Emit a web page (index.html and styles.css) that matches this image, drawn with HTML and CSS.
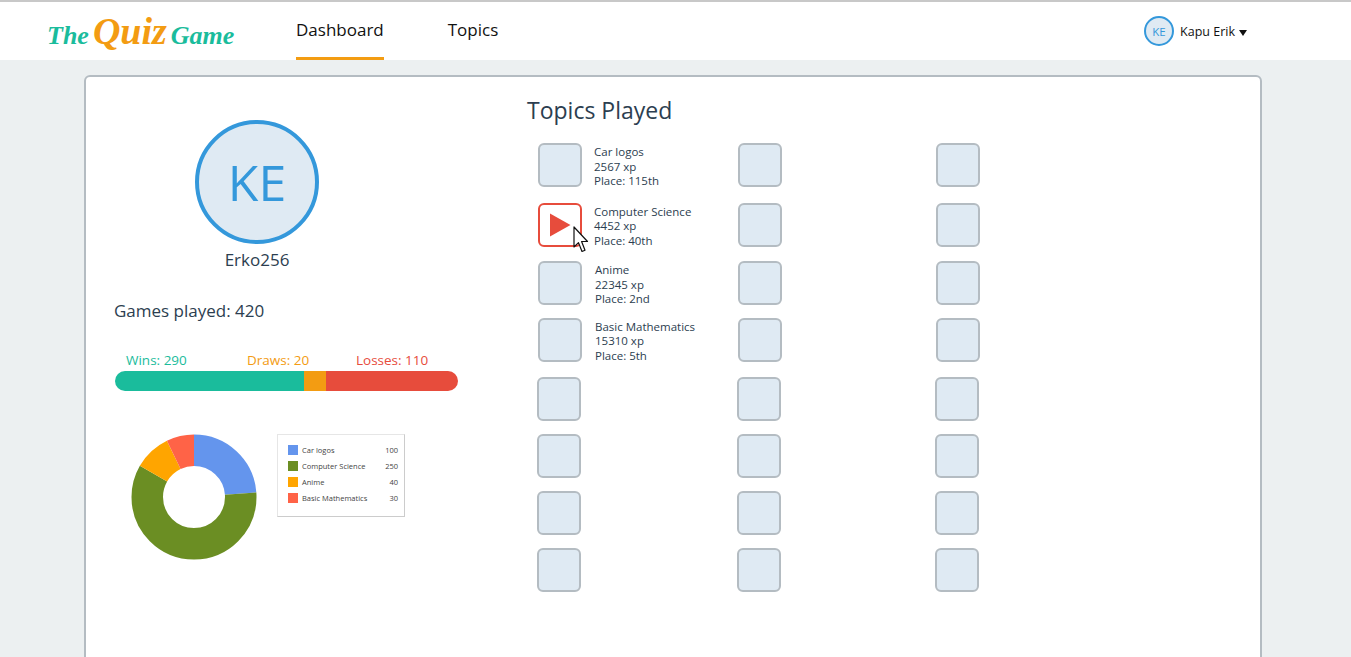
FILE: index.html
```html
<!DOCTYPE html>
<html lang="en">
<head>
  <meta charset="UTF-8">
  <title>The Quiz Game - Dashboard</title>
  <link rel="stylesheet" href="styles.css">
</head>
<body>

  <header class="topbar">
    <div class="logo"><span class="logo-small">The</span> <span class="logo-big">Quiz</span> <span class="logo-small">Game</span></div>
    <nav class="nav">
      <a class="nav-link active">Dashboard</a>
      <a class="nav-link">Topics</a>
    </nav>
    <div class="user">
      <div class="user-avatar">KE</div>
      <span class="user-name">Kapu Erik</span>
      <span class="caret"></span>
    </div>
  </header>

  <main class="card">
    <section class="profile">
      <div class="avatar">KE</div>
      <div class="username">Erko256</div>
      <div class="games">Games played: 420</div>

      <div class="bar-labels">
        <span class="label-wins">Wins: 290</span>
        <span class="label-draws">Draws: 20</span>
        <span class="label-losses">Losses: 110</span>
      </div>
      <div class="bar">
        <div class="bar-wins"></div>
        <div class="bar-draws"></div>
        <div class="bar-losses"></div>
      </div>

      <div class="chart-row">
        <svg class="donut" width="126" height="126" viewBox="0 0 126 126">
          <g transform="rotate(-90 63 63)" fill="none" stroke-width="31.5">
            <circle cx="63" cy="63" r="46.75" pathLength="420" stroke="#6495ed" stroke-dasharray="100 320"></circle>
            <circle cx="63" cy="63" r="46.75" pathLength="420" stroke="#6b8e23" stroke-dasharray="250 170" stroke-dashoffset="-100"></circle>
            <circle cx="63" cy="63" r="46.75" pathLength="420" stroke="#ffa500" stroke-dasharray="40 380" stroke-dashoffset="-350"></circle>
            <circle cx="63" cy="63" r="46.75" pathLength="420" stroke="#ff6347" stroke-dasharray="30 390" stroke-dashoffset="-390"></circle>
          </g>
        </svg>
        <div class="legend">
          <div class="legend-row"><i class="swatch swatch-blue"></i><span class="legend-name">Car logos</span><span>100</span></div>
          <div class="legend-row"><i class="swatch swatch-green"></i><span class="legend-name">Computer Science</span><span>250</span></div>
          <div class="legend-row"><i class="swatch swatch-orange"></i><span class="legend-name">Anime</span><span>40</span></div>
          <div class="legend-row"><i class="swatch swatch-red"></i><span class="legend-name">Basic Mathematics</span><span>30</span></div>
        </div>
      </div>
    </section>

    <section class="topics">
      <h2>Topics Played</h2>
      <div class="tile-rows">
        <div class="tile-row">
          <div class="topic">
            <div class="tile"></div>
            <div class="topic-info">Car logos<br>2567 xp<br>Place: 115th</div>
          </div>
          <div class="tile"></div>
          <div class="tile"></div>
        </div>
        <div class="tile-row row-second">
          <div class="topic">
            <div class="tile tile-play">
              <svg width="22" height="24" viewBox="0 0 22 24"><path d="M1 0.5 21.5 12 1 23.5z" fill="#e74c3c"></path></svg>
              <svg class="pointer" width="16" height="29" viewBox="0 0 16 29"><path d="M1 1V21L5.5 16.6 9 25.500 12 24.200 8.600 15.500H14.500z" fill="#fff" stroke="#111" stroke-width="1.200" stroke-linejoin="round"></path></svg>
            </div>
            <div class="topic-info">Computer Science<br>4452 xp<br>Place: 40th</div>
          </div>
          <div class="tile"></div>
          <div class="tile"></div>
        </div>
        <div class="tile-row">
          <div class="topic">
            <div class="tile"></div>
            <div class="topic-info topic-shift">Anime<br>22345 xp<br>Place: 2nd</div>
          </div>
          <div class="tile"></div>
          <div class="tile"></div>
        </div>
        <div class="tile-row row-fourth">
          <div class="topic">
            <div class="tile"></div>
            <div class="topic-info topic-shift">Basic Mathematics<br>15310 xp<br>Place: 5th</div>
          </div>
          <div class="tile"></div>
          <div class="tile"></div>
        </div>
        <div class="tile-row row-lower row-fifth"><div class="tile"></div><div class="tile"></div><div class="tile"></div></div>
        <div class="tile-row row-lower"><div class="tile"></div><div class="tile"></div><div class="tile"></div></div>
        <div class="tile-row row-lower"><div class="tile"></div><div class="tile"></div><div class="tile"></div></div>
        <div class="tile-row row-lower"><div class="tile"></div><div class="tile"></div><div class="tile"></div></div>
      </div>
    </section>
  </main>

</body>
</html>
```

FILE: styles.css
```css
html, body {
  height: 657px;
  overflow: hidden;
}

body {
  margin: 0;
  background-color: #ecf0f1;
  color: #2c3e50;
  font-family: "Open Sans", "Noto Sans", sans-serif;
}

.topbar {
  height: 58px;
  border-top: 2px solid #c8c8c8;
  background-color: #fff;
  display: flex;
  align-items: center;
  padding-left: 47px;
  padding-right: 104px;
}

.logo {
  width: 249px;
  font-family: "Liberation Serif", serif;
  font-style: italic;
  font-weight: bold;
  color: #1abc9c;
  white-space: nowrap;
}

.logo-small {
  font-size: 26px;
}

.logo-big {
  font-size: 38px;
  color: #f39c12;
}

.nav {
  display: flex;
  align-self: stretch;
  gap: 64px;
}

.nav-link {
  display: flex;
  align-items: center;
  height: 55px;
  font-size: 17px;
  color: #111;
  border-bottom: 3px solid transparent;
}

.nav-link.active {
  border-bottom-color: #f39c12;
}

.user {
  margin-left: auto;
  display: flex;
  align-items: center;
  font-size: 12.5px;
  color: #111;
}

.user-avatar {
  width: 26px;
  height: 26px;
  border: 2px solid #3498db;
  border-radius: 50%;
  background-color: #dfeaf3;
  color: #3498db;
  font-size: 11.5px;
  display: flex;
  align-items: center;
  justify-content: center;
  margin-right: 6px;
}

.caret {
  margin-left: 4px;
  margin-top: 3px;
  border-left: 4.500px solid transparent;
  border-right: 4.500px solid transparent;
  border-top: 6px solid #111;
}

.card {
  margin: 15px 89px 0 84px;
  height: 700px;
  box-sizing: border-box;
  border: 2px solid #b4bcc2;
  border-radius: 6px;
  background-color: #fff;
  padding: 17px 0 0 28px;
  display: flex;
}

.profile {
  width: 345px;
  margin-right: 68px;
  padding-top: 26px;
}

.avatar {
  width: 116px;
  height: 116px;
  margin-left: 81px;
  border: 4px solid #3498db;
  border-radius: 50%;
  background-color: #dfeaf3;
  color: #3498db;
  font-size: 50px;
  display: flex;
  align-items: center;
  justify-content: center;
}

.username {
  width: 124px;
  margin: 3px 0 0 81px;
  text-align: center;
  font-size: 17px;
  line-height: 26px;
}

.games {
  margin-top: 25px;
  font-size: 17px;
  line-height: 26px;
}

.bar-labels {
  display: flex;
  margin-top: 27px;
  font-size: 13.500px;
  line-height: 18px;
}

.label-wins {
  color: #1abc9c;
  margin-left: 12px;
  width: 121px;
}

.label-draws {
  color: #f39c12;
  width: 109px;
}

.label-losses {
  color: #e74c3c;
}

.bar {
  display: flex;
  width: 343px;
  height: 20px;
  margin-top: 2px;
  margin-left: 1px;
  border-radius: 10px;
  overflow: hidden;
}

.bar-wins {
  width: 189px;
  background-color: #1abc9c;
}

.bar-draws {
  width: 22px;
  background-color: #f39c12;
}

.bar-losses {
  flex: 1;
  background-color: #e74c3c;
}

.chart-row {
  display: flex;
  align-items: flex-start;
  margin-top: 43px;
  margin-left: 17px;
}

.donut {
  flex-shrink: 0;
  margin-right: 20px;
}

.legend {
  width: 128px;
  height: 83px;
  box-sizing: border-box;
  padding: 7px 6px 0 10px;
  background-color: #fff;
  border: 1px solid #e6e6e6;
  border-right-color: #ccc;
  border-bottom-color: #ccc;
  font-size: 7.500px;
  color: #444;
}

.legend-row {
  display: flex;
  align-items: center;
  height: 16px;
}

.swatch {
  width: 10px;
  height: 10px;
  margin-right: 4px;
}

.swatch-blue { background-color: #6495ed; }
.swatch-green { background-color: #6b8e23; }
.swatch-orange { background-color: #ffa500; }
.swatch-red { background-color: #ff6347; }

.legend-name {
  flex: 1;
  white-space: nowrap;
}

h2 {
  margin: 0;
  font-size: 23px;
  font-weight: 400;
  line-height: 32px;
}

.tile-rows {
  margin-top: 17px;
  margin-left: 11px;
  display: flex;
  flex-direction: column;
  gap: 13px;
}

.tile-row {
  display: grid;
  grid-template-columns: 200px 198px 44px;
}

.row-second { margin-top: 1px; }
.row-fourth { margin-top: -2px; }
.row-fifth { margin-top: 1px; }
.row-lower { margin-left: -1px; }

.topic {
  display: flex;
  gap: 12px;
}

.topic-info {
  font-size: 11.500px;
  line-height: 14.500px;
  padding-top: 2px;
  white-space: nowrap;
}

.topic-shift {
  margin-left: 1px;
}

.tile {
  width: 40px;
  height: 40px;
  flex-shrink: 0;
  border: 2px solid #b4bcc2;
  border-radius: 6px;
  background-color: #dfeaf3;
}

.tile-play {
  position: relative;
  border-color: #e74c3c;
  background-color: #fff;
  display: flex;
  align-items: center;
  justify-content: center;
}

.pointer {
  position: absolute;
  left: 33px;
  top: 21px;
}
```
